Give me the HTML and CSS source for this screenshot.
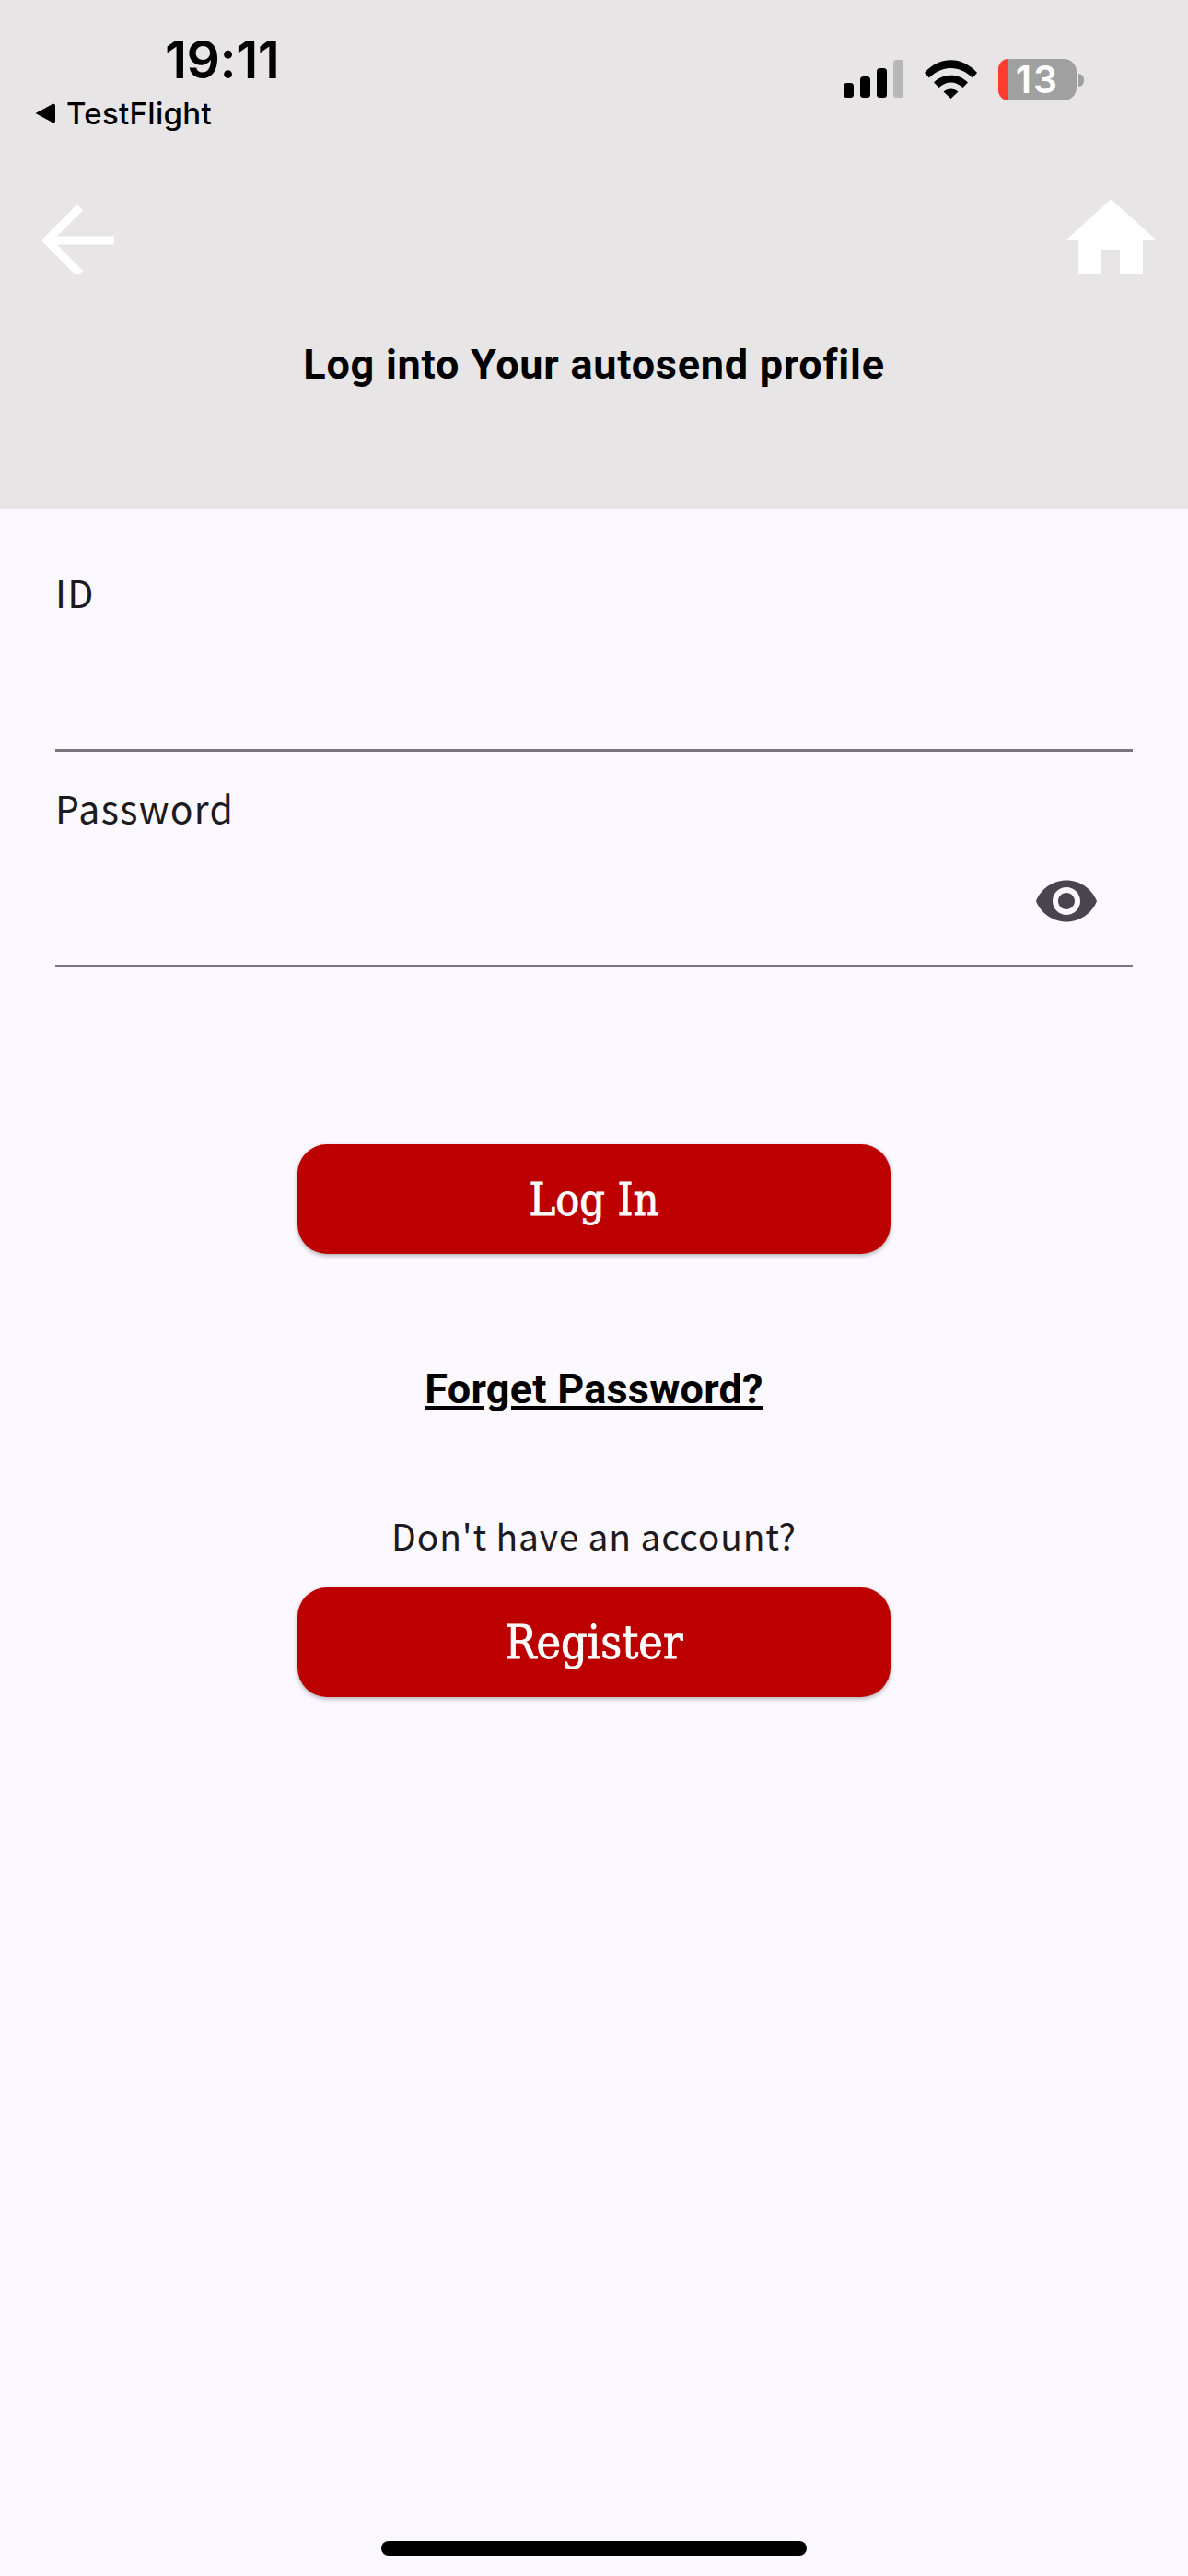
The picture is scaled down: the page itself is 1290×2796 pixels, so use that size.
FILE: index.html
```html
<!DOCTYPE html>
<html lang="en">
<head>
    <meta charset="UTF-8">
    <meta name="viewport" content="width=device-width, initial-scale=1.0">
    <title>Log In</title>
    <link rel="stylesheet" href="styles.css">
</head>
<body>
    <header class="header">
        <div class="status">
            <div class="status-left">
                <div class="time">19:11</div>
                <div class="back-app">
                    <svg class="back-tri" viewBox="0 0 22 22"><path d="M0.5 11 L19 1 Q22 0 22 3 L22 19 Q22 22 19 21 Z" fill="#000"/></svg>
                    <span>TestFlight</span>
                </div>
            </div>
            <div class="status-right">
                <svg class="signal" viewBox="0 0 65 41">
                    <rect x="0" y="25" width="11" height="16" rx="3.5" fill="#000"/>
                    <rect x="18" y="18" width="11" height="23" rx="3.5" fill="#000"/>
                    <rect x="36" y="9" width="11" height="32" rx="3.5" fill="#000"/>
                    <rect x="54" y="0" width="11" height="41" rx="3.5" fill="#b8b7b8"/>
                </svg>
                <svg class="wifi" viewBox="0 0 57 42">
                    <path d="M0 14 C16 -4.500 41 -4.500 57 14 L52 19.500 C38 5.500 19 5.500 5 19.500 Z" fill="#000"/>
                    <path d="M10 24.500 C20 14 37 14 47 24.500 L41.500 30 C33.500 22.500 23.500 22.500 15.500 30 Z" fill="#000"/>
                    <path d="M20.500 34.500 C25 30.500 32 30.500 36.500 34.500 L28.500 42 Z" fill="#000"/>
                </svg>
                <div class="battery">
                    <div class="battery-body">
                        <div class="battery-low"></div>
                        <span class="battery-num">13</span>
                    </div>
                    <div class="battery-nub"></div>
                </div>
            </div>
        </div>
        <div class="nav">
            <svg class="nav-back" viewBox="0 0 80 81"><path d="M79 45 H8 M42 9 L6 45 L42 81" fill="none" stroke="#fff" stroke-width="9"/></svg>
            <svg class="nav-home" viewBox="0 0 99 81"><path d="M49.500 0 L99 45 H84 V81 H59 V55 H39 V81 H14 V45 H0 Z" fill="#fff"/></svg>
        </div>
        <h1 class="title">Log into Your autosend profile</h1>
    </header>

    <main class="main">
        <div class="field">
            <label class="field-label" for="userId">ID</label>
            <div class="field-row"><input class="field-input" type="text" id="userId"></div>
        </div>
        <div class="field">
            <label class="field-label" for="password">Password</label>
            <div class="field-row">
                <input class="field-input" type="password" id="password">
                <svg class="eye" viewBox="0 0 24 24"><path fill="#49454f" d="M12 4.500C7 4.500 2.730 7.610 1 12c1.730 4.390 6 7.500 11 7.500s9.270-3.110 11-7.500c-1.730-4.390-6-7.500-11-7.500zM12 17c-2.760 0-5-2.240-5-5s2.240-5 5-5 5 2.240 5 5-2.240 5-5 5zm0-8c-1.660 0-3 1.340-3 3s1.340 3 3 3 3-1.340 3-3-1.340-3-3-3z"/></svg>
            </div>
        </div>

        <div class="actions">
            <button class="btn btn-login">Log In</button>
            <a class="forgot" href="#">Forget Password?</a>
            <p class="no-account">Don't have an account?</p>
            <button class="btn btn-register">Register</button>
        </div>
    </main>

    <div class="home-bar"></div>
</body>
</html>
```

FILE: styles.css
```css
* {
    box-sizing: border-box;
}
html, body {
    height: 100%;
}
body {
    margin: 0;
    height: 2796px;
    display: flex;
    flex-direction: column;
    background: #fbf9ff;
    font-family: "Noto Sans CJK KR", "Noto Sans", sans-serif;
    color: #1d1b20;
    overflow: hidden;
}

/* top grey part */
.header {
    height: 552px;
    background: #e7e5e6;
}
.status {
    height: 216px;
    display: flex;
    justify-content: space-between;
    padding: 0 113px 0 38px;
    font-family: Inter, sans-serif;
    color: #000;
}
.status-left {
    padding-top: 33px;
}
.time {
    margin-left: 141px;
    font-size: 57px;
    line-height: 64px;
    font-weight: 600;
    letter-spacing: -0.5px;
}
.back-app {
    display: flex;
    align-items: center;
    gap: 12px;
    margin-top: 6px;
    font-size: 33px;
    line-height: 40px;
    font-weight: 500;
    letter-spacing: 0.3px;
}
.back-tri {
    width: 22px;
    height: 22px;
}
.status-right {
    display: flex;
    align-items: flex-start;
    gap: 23px;
    padding-top: 65px;
}
.signal {
    width: 65px;
    height: 41px;
}
.wifi {
    width: 57px;
    height: 42px;
}
.battery {
    display: flex;
    align-items: center;
    margin-top: -1px;
}
.battery-body {
    position: relative;
    width: 85px;
    height: 45px;
    border-radius: 14px;
    background: #a0a0a0;
    display: flex;
    align-items: center;
    justify-content: center;
}
.battery-low {
    position: absolute;
    left: 0;
    top: 0;
    bottom: 0;
    width: 11px;
    border-radius: 14px 0 0 14px;
    background: #ff3b30;
}
.battery-num {
    color: #fff;
    font-size: 41px;
    line-height: 45px;
    font-weight: 600;
    letter-spacing: 2px;
}
.battery-nub {
    width: 6px;
    height: 14px;
    margin-left: 2px;
    border-radius: 0 7px 7px 0;
    background: #a0a0a0;
}

.nav {
    display: flex;
    justify-content: space-between;
    padding: 0 34px 0 45px;
}
.nav-back {
    width: 80px;
    height: 81px;
}
.nav-home {
    width: 99px;
    height: 81px;
}
.title {
    margin: 69px 0 0;
    text-align: center;
    font-family: Roboto, sans-serif;
    font-size: 45px;
    line-height: 60px;
    font-weight: 700;
    letter-spacing: 0.75px;
    color: #000;
}

/* form */
.main {
    flex: 1;
    padding: 30px 60px 0;
}
.field {
    height: 234px;
    padding-top: 30px;
    display: flex;
    flex-direction: column;
    justify-content: space-between;
    border-bottom: 3px solid #79747e;
}
.field-label {
    display: block;
    font-size: 41px;
    line-height: 60px;
    letter-spacing: 1.3px;
}
.field-row {
    display: flex;
    align-items: center;
    justify-content: space-between;
    height: 80px;
    margin-bottom: 29px;
    padding-right: 36px;
}
.field-input {
    flex: 1;
    height: 60px;
    border: none;
    outline: none;
    background: transparent;
}
.eye {
    width: 72px;
    height: 72px;
}

.actions {
    display: flex;
    flex-direction: column;
    align-items: center;
    margin-top: 192px;
}
.btn {
    width: 644px;
    height: 119px;
    border: none;
    border-radius: 32px;
    background: #bc0000;
    color: #fff;
    font-family: "DejaVu Serif Condensed", "DejaVu Serif", serif;
    font-stretch: condensed;
    -webkit-text-stroke: 0.8px #fff;
    box-shadow: 0 2px 5px rgba(0, 0, 0, 0.3);
}
.btn-login {
    font-size: 48px;
}
.btn-register {
    font-size: 50px;
}
.forgot {
    margin-top: 117px;
    font-family: Roboto, sans-serif;
    font-size: 45px;
    line-height: 60px;
    font-weight: 700;
    letter-spacing: 0.25px;
    color: #000;
    text-decoration: underline;
}
.no-account {
    margin: 101px 0 30px;
    font-size: 39px;
    line-height: 54px;
    letter-spacing: 0.8px;
}

.home-bar {
    width: 462px;
    height: 16px;
    margin: 0 auto 22px;
    border-radius: 8px;
    background: #000;
}
```
